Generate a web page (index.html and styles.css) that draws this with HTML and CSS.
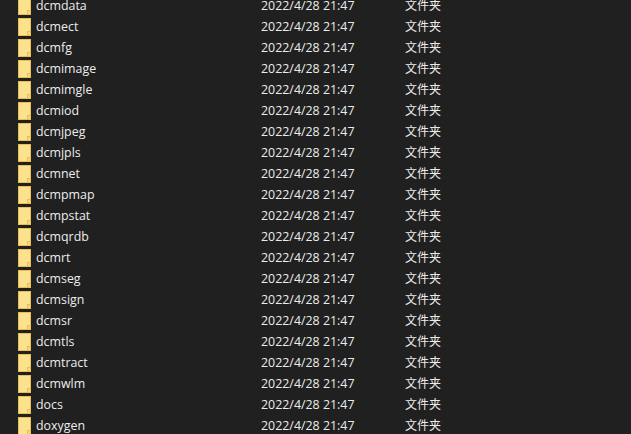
FILE: index.html
```html
<!DOCTYPE html>
<html lang="en">
<head>
    <meta charset="UTF-8">
    <title>Folder listing</title>
    <link rel="stylesheet" href="styles.css">
</head>
<body>
    <svg class="defs" width="0" height="0">
        <symbol id="folder" viewBox="0 0 13 18">
            <path d="M0 0H13V18H0Z" fill="#e9bf55"/>
            <path d="M1 1H12V13H9V17H1Z" fill="#fde28e"/>
            <path d="M10 14H12V17H10Z" fill="#fbd873"/>
        </symbol>
    </svg>
    <div class="list" id="list"></div>
    <script>
        const names = ['dcmdata', 'dcmect', 'dcmfg', 'dcmimage', 'dcmimgle', 'dcmiod', 'dcmjpeg',
            'dcmjpls', 'dcmnet', 'dcmpmap', 'dcmpstat', 'dcmqrdb', 'dcmrt', 'dcmseg', 'dcmsign',
            'dcmsr', 'dcmtls', 'dcmtract', 'dcmwlm', 'docs', 'doxygen'];

        document.getElementById('list').innerHTML = names.map(name => `
            <div class="row">
                <svg class="icon"><use href="#folder"></use></svg>
                <span class="name">${name}</span>
                <span class="date">2022/4/28 21:47</span>
                <span class="type">文件夹</span>
            </div>`).join('');
    </script>
</body>
</html>
```

FILE: styles.css
```css
html, body {
    height: 100%;
    overflow: hidden;
}
body {
    margin: 0;
    background: #202020;
    color: #ececec;
    font-family: "Open Sans", "Noto Sans CJK SC", sans-serif;
    font-size: 12.4px;
}
.defs {
    display: block;
}
.list {
    margin-top: -5px;
}
.row {
    display: grid;
    grid-template-columns: 13px 220px 139px auto;
    align-items: center;
    height: 21px;
    padding-left: 18px;
    column-gap: 5px;
    white-space: nowrap;
}
.icon {
    width: 13px;
    height: 18px;
}
.type {
    font-size: 12px;
    margin-bottom: 2px;
}
```
